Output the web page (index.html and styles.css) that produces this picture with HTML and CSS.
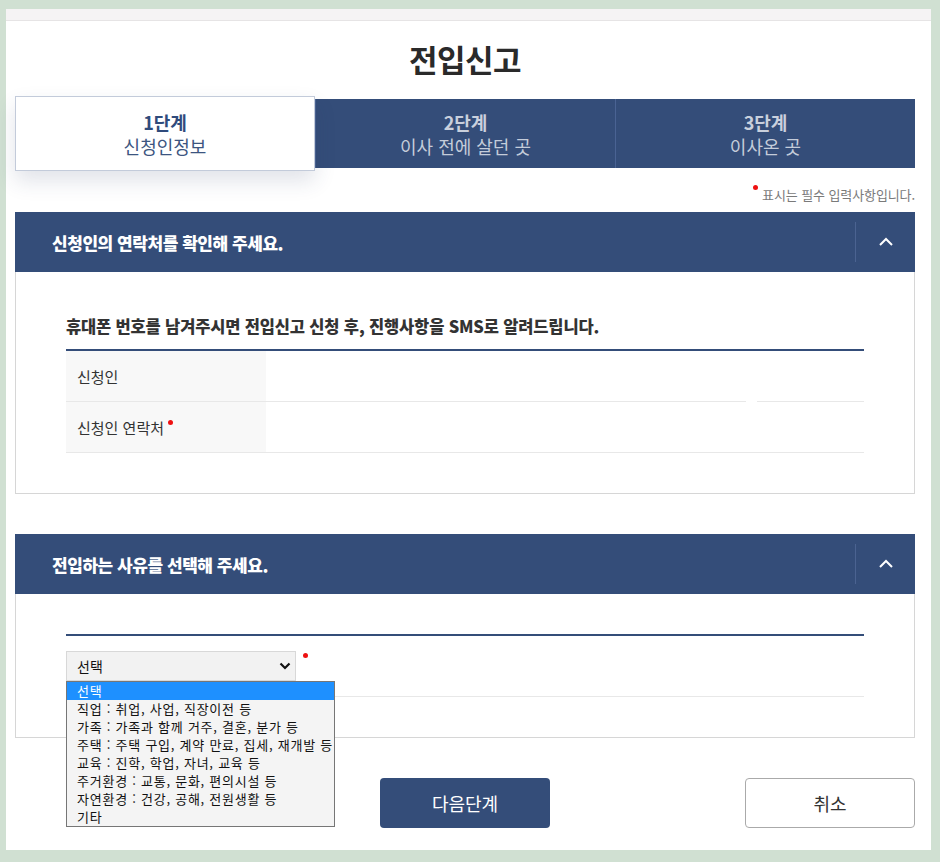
FILE: index.html
```html
<!DOCTYPE html>
<html lang="ko">
<head>
<meta charset="utf-8">
<title>전입신고</title>
<link rel="stylesheet" href="styles.css">
</head>
<body>
<div class="page">
  <div class="top-strip"></div>
  <div class="content">
    <h1 class="title">전입신고</h1>

    <ol class="steps">
      <li class="step active"><strong>1단계</strong><span>신청인정보</span></li>
      <li class="step"><strong>2단계</strong><span>이사 전에 살던 곳</span></li>
      <li class="step"><strong>3단계</strong><span>이사온 곳</span></li>
    </ol>

    <p class="req-note"><i class="dot"></i>표시는 필수 입력사항입니다.</p>

    <section class="panel">
      <header class="panel-head">
        <h2>신청인의 연락처를 확인해 주세요.</h2>
        <button class="toggle" type="button" aria-label="접기">
          <svg width="16" height="10" viewBox="0 0 16 10"><path d="M2 8 L8 2 L14 8" fill="none" stroke="#fff" stroke-width="2"/></svg>
        </button>
      </header>
      <div class="panel-body">
        <h3 class="lead">휴대폰 번호를 남겨주시면 전입신고 신청 후, 진행사항을 SMS로 알려드립니다.</h3>
        <div class="form-table">
          <div class="row">
            <div class="th">신청인</div>
            <div class="td td-main"></div>
            <div class="td-gap"></div>
            <div class="td td-side"></div>
          </div>
          <div class="row">
            <div class="th">신청인 연락처<i class="dot sup"></i></div>
            <div class="td td-full"></div>
          </div>
        </div>
      </div>
    </section>

    <section class="panel panel-second">
      <header class="panel-head">
        <h2>전입하는 사유를 선택해 주세요.</h2>
        <button class="toggle" type="button" aria-label="접기">
          <svg width="16" height="10" viewBox="0 0 16 10"><path d="M2 8 L8 2 L14 8" fill="none" stroke="#fff" stroke-width="2"/></svg>
        </button>
      </header>
      <div class="panel-body">
        <div class="form-table form-table-tight">
          <div class="row select-row">
            <div class="select-wrap">
              <div class="select-box">
                <span>선택</span>
                <svg width="12" height="8" viewBox="0 0 12 8"><path d="M1.5 1.5 L6 6 L10.5 1.5" fill="none" stroke="#111" stroke-width="2.2"/></svg>
              </div>
              <i class="dot sel-dot"></i>
              <ul class="dropdown">
                <li class="selected">선택</li>
                <li>직업 : 취업, 사업, 직장이전 등</li>
                <li>가족 : 가족과 함께 거주, 결혼, 분가 등</li>
                <li>주택 : 주택 구입, 계약 만료, 집세, 재개발 등</li>
                <li>교육 : 진학, 학업, 자녀, 교육 등</li>
                <li>주거환경 : 교통, 문화, 편의시설 등</li>
                <li>자연환경 : 건강, 공해, 전원생활 등</li>
                <li>기타</li>
              </ul>
            </div>
          </div>
        </div>
      </div>
    </section>

    <div class="actions">
      <span></span>
      <button class="btn btn-primary" type="button">다음단계</button>
      <button class="btn btn-cancel" type="button">취소</button>
    </div>
  </div>
</div>
</body>
</html>
```

FILE: styles.css
```css
* { box-sizing: border-box; }

html, body {
  margin: 0;
  padding: 0;
}

body {
  background: #d0e0d2;
  font-family: "Noto Sans CJK KR", "Noto Sans", sans-serif;
  color: #333;
  width: 940px;
  height: 862px;
  overflow: hidden;
}

.page {
  margin: 9px 9px 0 6px;
  background: #fff;
  height: 841px;
}

.top-strip {
  height: 12px;
  background: #f5f3f4;
  border-bottom: 1px solid #e6e4e5;
}

.content {
  padding: 0 16px 0 9px;
}

.title {
  margin: 0;
  padding-top: 18px;
  height: 78px;
  line-height: 40px;
  text-align: center;
  font-size: 31px;
  font-weight: 700;
  color: #2a2a2a;
  letter-spacing: -0.5px;
}

/* steps */
.steps {
  list-style: none;
  margin: 0;
  padding: 0;
  display: grid;
  grid-template-columns: repeat(3, 300px);
  height: 69px;
  background: #344d79;
}

.step {
  display: flex;
  flex-direction: column;
  align-items: center;
  justify-content: center;
  padding-top: 1px;
  color: #c4ccda;
  border-left: 1px solid #4a6393;
}

.step:first-child { border-left: 0; }

.step strong {
  font-size: 18px;
  line-height: 24px;
  font-weight: 700;
  color: #c9d0dd;
}

.step span {
  font-size: 18px;
  line-height: 24px;
  font-weight: 400;
}

.step.active {
  background: #fff;
  margin: -3px 0;
  border: 1px solid #c3cbda;
  box-shadow: 0 10px 20px rgba(40, 60, 100, 0.14);
  position: relative;
  z-index: 1;
}

.step.active strong { color: #2f4b7c; }
.step.active span { color: #3c5580; }

/* required note */
.req-note {
  margin: 0;
  height: 44px;
  padding-top: 17px;
  text-align: right;
  font-size: 13px;
  line-height: 20px;
  color: #7a7a7a;
  letter-spacing: -0.1px;
}

.dot {
  display: inline-block;
  width: 5px;
  height: 5px;
  border-radius: 50%;
  background: #ee1111;
  vertical-align: top;
  margin-right: 4px;
}

/* panels */
.panel-head {
  display: flex;
  align-items: center;
  height: 60px;
  background: #344d79;
  padding-left: 37px;
}

.panel-head h2 {
  flex: 1;
  margin: 0;
  color: #fff;
  font-size: 17px;
  font-weight: 900;
  letter-spacing: -0.45px;
}

.toggle {
  width: 60px;
  height: 40px;
  border: 0;
  border-left: 1px solid #4b6391;
  background: transparent;
  padding: 0;
  display: flex;
  align-items: center;
  justify-content: center;
  cursor: pointer;
}

.panel-body {
  border: 1px solid #d6d6d6;
  border-top: 0;
  padding: 42px 50px 40px;
}

.lead {
  margin: 0 0 11px;
  font-size: 16.5px;
  line-height: 24px;
  font-weight: 800;
  color: #333;
  letter-spacing: -0.15px;
}

.form-table {
  border-top: 2px solid #344d79;
}

.row {
  display: flex;
  height: 51px;
}

.th {
  width: 200px;
  background: #f8f8f8;
  border-bottom: 1px solid #e8e8e8;
  padding-left: 11px;
  display: flex;
  align-items: center;
  font-size: 15px;
  color: #333;
}

.td { border-bottom: 1px solid #e8e8e8; }
.td-main { width: 480px; }
.td-gap { width: 11px; }
.td-side { flex: 1; }
.td-full { flex: 1; }

.dot.sup {
  margin: -10px 0 0 4px;
  vertical-align: middle;
}

/* second panel */
.panel-second { margin-top: 40px; }
.panel-second .panel-body { padding-top: 40px; }

.select-row {
  height: 61px;
  padding: 15px 0;
  border-bottom: 1px solid #e8e8e8;
}

.select-wrap {
  position: relative;
  display: flex;
  align-items: flex-start;
}

.select-box {
  width: 230px;
  height: 30px;
  background: #f2f2f2;
  border: 1px solid #d8d8d8;
  display: flex;
  align-items: center;
  justify-content: space-between;
  padding: 0 4px 0 10px;
  font-size: 14px;
  color: #111;
}

.sel-dot {
  margin: 2px 0 0 7px;
}

.dropdown {
  position: absolute;
  top: 30px;
  left: 0;
  width: 269px;
  margin: 0;
  padding: 0;
  list-style: none;
  background: #f4f4f4;
  border: 1px solid #767676;
  z-index: 5;
}

.dropdown li {
  height: 18px;
  line-height: 18px;
  font-size: 13px;
  padding-left: 10px;
  color: #111;
  white-space: nowrap;
  letter-spacing: 0.75px;
}

.dropdown li.selected {
  background: #1e90ff;
  color: #fff;
}

/* actions */
.actions {
  margin-top: 40px;
  display: grid;
  grid-template-columns: 1fr 170px 1fr;
  align-items: center;
}

.btn {
  height: 50px;
  width: 170px;
  border-radius: 4px;
  font-family: inherit;
  font-size: 18px;
  cursor: pointer;
}

.btn-primary {
  background: #344d79;
  color: #fff;
  border: 0;
}

.btn-cancel {
  justify-self: end;
  background: #fff;
  color: #333;
  border: 1px solid #aaa;
}
```
